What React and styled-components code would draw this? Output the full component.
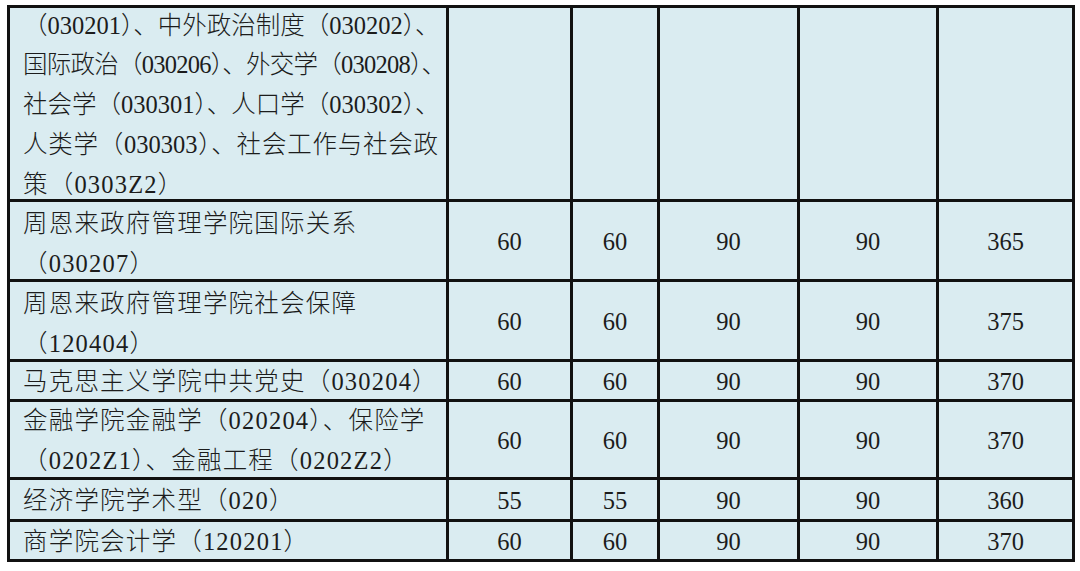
import React from "react";
import styled, { createGlobalStyle } from "styled-components";

const Global = createGlobalStyle`
  html, body { margin: 0; padding: 0; background: #ffffff; }
  body { font-family: "Liberation Serif", "Noto Sans CJK SC", serif; }
`;

const Page = styled.div`
  width: 1080px;
  height: 571px;
  padding: 5px 0 0 7px;
  box-sizing: border-box;
  overflow: hidden;
`;

const Table = styled.table`
  border-collapse: collapse;
  table-layout: fixed;
  width: 1065px;
  background: #daecf1;
  color: #1c1c1c;
  font-family: "Liberation Serif", "Noto Sans CJK SC", serif;
  font-weight: 300;
  font-size: 24.5px;
  border: 3px solid #111;
`;

const Row = styled.tr`
  height: ${(p) => p.$h}px;
`;

const Cell = styled.td`
  border: 3px solid #111;
  padding: 2px 0 0;
  text-align: center;
  vertical-align: middle;
  line-height: 33px;
  white-space: nowrap;
`;

const NameCell = styled(Cell)`
  padding: 0 8px 0 13px;
  text-align: left;
`;

const Stack = styled.div`
  line-height: ${(p) => p.$lh}px;
  margin: ${(p) => p.$mt}px 0 ${(p) => p.$mb}px;
  letter-spacing: 1.2px;
`;

const Line = styled.div`
  text-align: left;
  text-align-last: ${(p) => (p.$justify ? "justify" : "left")};
  ${(p) => (p.$ls !== undefined ? `letter-spacing: ${p.$ls}px;` : "")}
`;

const cols = [439, 124, 87, 140, 139, 136];

const rows = [
  {
    h: 194,
    lh: 39.7,
    mt: -3,
    mb: -6,
    lines: [
      ["（030201）、中外政治制度（030202）、", true, 0],
      ["国际政治（030206）、外交学（030208）、", true, -0.75],
      ["社会学（030301）、人口学（030302）、", true, 0],
      ["人类学（030303）、社会工作与社会政", true, 0],
      ["策（0303Z2）", false],
    ],
    vals: ["", "", "", "", ""],
  },
  {
    h: 80,
    lh: 40,
    mt: 1,
    mb: -5,
    lines: [["周恩来政府管理学院国际关系"], ["（030207）"]],
    vals: ["60", "60", "90", "90", "365"],
  },
  {
    h: 80,
    lh: 40,
    mt: 1,
    mb: -5,
    lines: [["周恩来政府管理学院社会保障"], ["（120404）"]],
    vals: ["60", "60", "90", "90", "375"],
  },
  {
    h: 40,
    lh: 33,
    mt: 2,
    mb: 0,
    lines: [["马克思主义学院中共党史（030204）"]],
    vals: ["60", "60", "90", "90", "370"],
  },
  {
    h: 78,
    lh: 40,
    mt: -1,
    mb: -4,
    lines: [["金融学院金融学（020204）、保险学"], ["（0202Z1）、金融工程（0202Z2）"]],
    vals: ["60", "60", "90", "90", "370"],
  },
  {
    h: 42,
    lh: 33,
    mt: 2,
    mb: 0,
    lines: [["经济学院学术型（020）"]],
    vals: ["55", "55", "90", "90", "360"],
  },
  {
    h: 40,
    lh: 33,
    mt: 2,
    mb: 0,
    lines: [["商学院会计学（120201）"]],
    vals: ["60", "60", "90", "90", "370"],
  },
];

export default function App() {
  return (
    <Page>
      <Global />
      <Table>
        <colgroup>
          {cols.map((w, i) => (
            <col key={i} style={{ width: w }} />
          ))}
        </colgroup>
        <tbody>
          {rows.map((r, i) => (
            <Row key={i} $h={r.h}>
              <NameCell>
                <Stack $lh={r.lh} $mt={r.mt} $mb={r.mb}>
                  {r.lines.map(([t, j, ls], k) => (
                    <Line key={k} $justify={j} $ls={ls}>
                      {t}
                    </Line>
                  ))}
                </Stack>
              </NameCell>
              {r.vals.map((v, k) => (
                <Cell key={k}>{v}</Cell>
              ))}
            </Row>
          ))}
        </tbody>
      </Table>
    </Page>
  );
}
